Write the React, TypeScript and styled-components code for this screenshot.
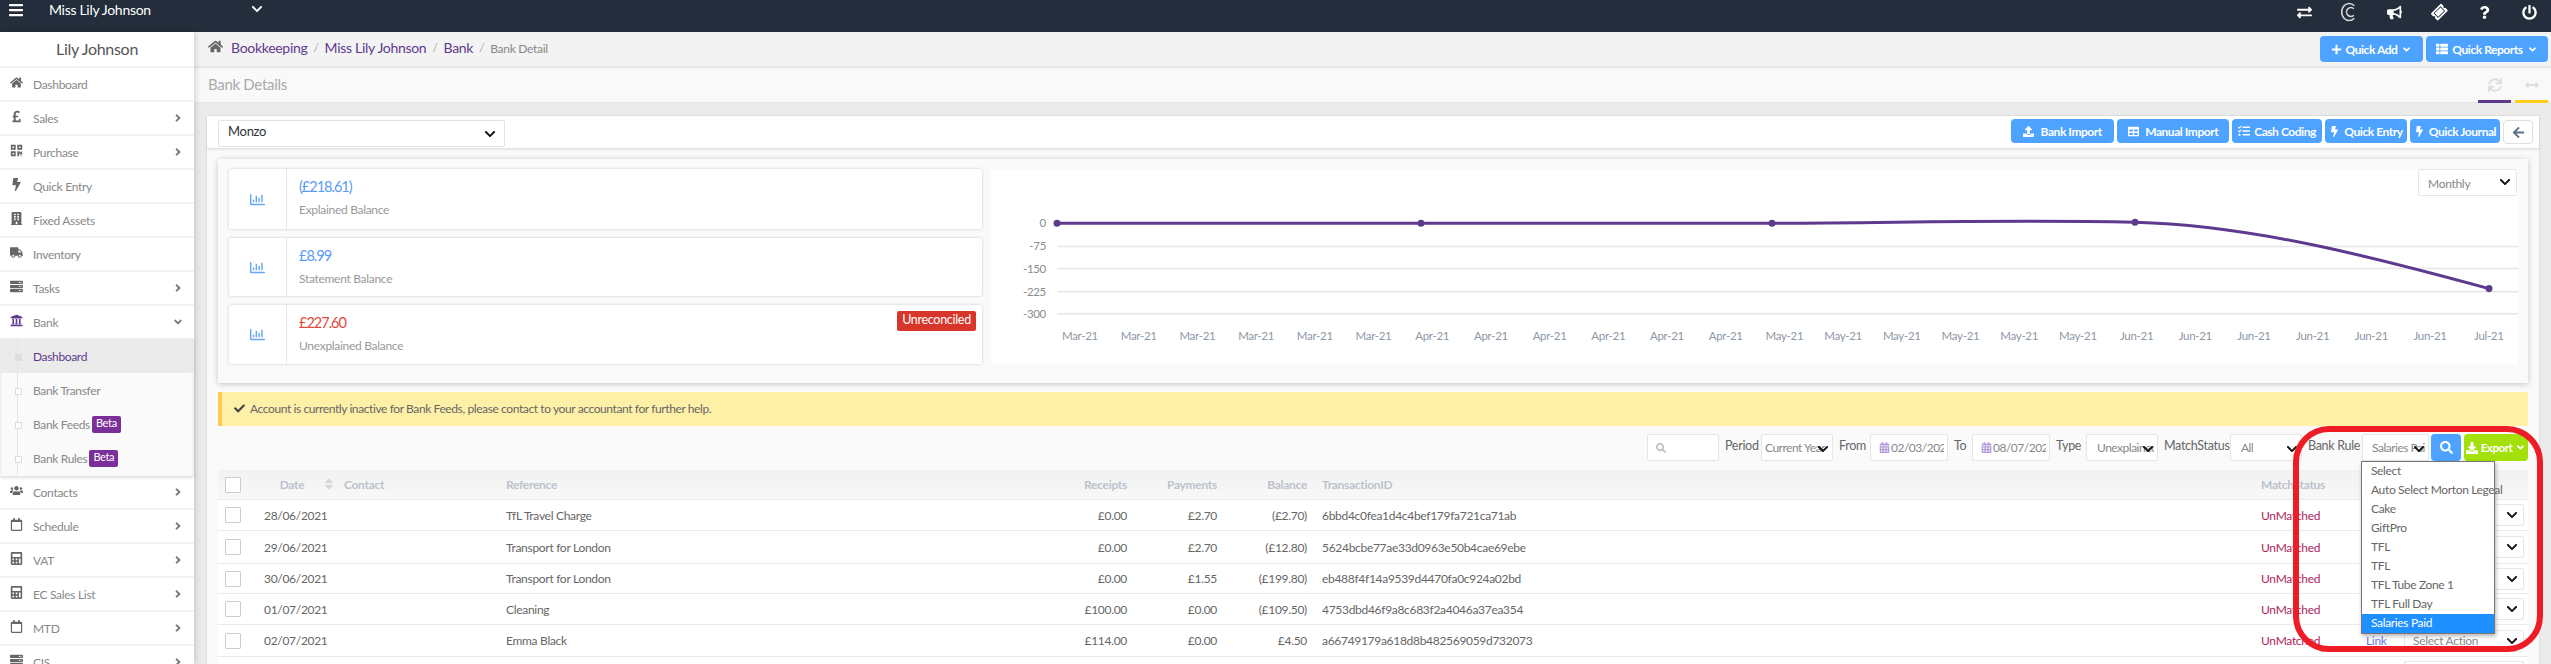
import React from "react";
import styled, { createGlobalStyle } from "styled-components";
import {
  FaBars, FaChevronDown, FaHome, FaPoundSign, FaQrcode, FaBolt, FaBuilding, FaTruck, FaServer,
  FaUniversity, FaUsers, FaRegCalendar, FaCalculator, FaAngleRight, FaAngleDown, FaRegChartBar,
  FaCheck, FaSearch, FaCalendarAlt, FaDownload, FaPlus, FaThList, FaUpload, FaTable, FaTasks,
  FaArrowLeft, FaExchangeAlt, FaSync, FaArrowsAltH, FaBullhorn, FaTicketAlt, FaQuestion, FaPowerOff,
  FaSort,
} from "react-icons/fa";

const Global = createGlobalStyle`
  html, body { margin: 0; padding: 0; background: #ebebeb; }
  * { box-sizing: border-box; }
  body { font-family: Lato, "Open Sans", "Liberation Sans", sans-serif; font-size: 12px; color: #666; letter-spacing: -0.3px; }
  button { letter-spacing: -0.45px; }
`;

const Page = styled.div`
  position: relative;
  width: 2551px;
  height: 664px;
  overflow: hidden;
  display: flex;
  flex-direction: column;
`;

const TopBar = styled.header`
  height: 32px;
  flex: none;
  background: #232d3b;
  color: #fff;
  display: flex;
  align-items: flex-start;
`;
const Burger = styled.span`
  width: 49px;
  padding: 2px 0 0 8px;
  font-size: 16px;
  line-height: 16px;
`;
const Client = styled.div`
  width: 202px;
  font-size: 14px;
  line-height: 20px;
`;
const ClientCaret = styled.span`
  font-size: 12px;
  line-height: 20px;
  padding-top: 1px;
`;
const TopIcons = styled.div`
  margin-left: auto;
  padding-right: 14px;
  display: flex;
  gap: 29px;
  height: 24px;
  align-items: center;
  font-size: 15px;
`;
const TopIcon = styled.span<{ $tilt?: boolean }>`
  width: 16px;
  display: flex;
  justify-content: center;
  transform: ${(p) => (p.$tilt ? "rotate(-45deg)" : "none")};
`;

const Body = styled.div`
  flex: 1;
  display: flex;
  min-height: 0;
`;
const Sidebar = styled.aside`
  width: 194px;
  flex: none;
  background: #fff;
  box-shadow: 2px 0 6px rgba(0, 0, 0, 0.14);
  position: relative;
  z-index: 2;
`;
const SideTitle = styled.div`
  height: 36px;
  font-size: 16px;
  line-height: 34px;
  text-align: center;
  color: #555;
  border-bottom: 2px solid #f3f3f3;
`;
const NavItem = styled.div`
  height: 34px;
  display: flex;
  align-items: center;
  border-bottom: 2px solid #f3f3f3;
  color: #888;
  font-size: 12px;
`;
const NavIcon = styled.span<{ $purple?: boolean }>`
  width: 33px;
  display: flex;
  justify-content: center;
  padding-bottom: 3px;
  padding-right: 1px;
  font-size: 13px;
  color: ${(p) => (p.$purple ? "#5e3a8e" : "#666")};
`;
const NavCaret = styled.span`
  margin-left: auto;
  padding-right: 10px;
  font-size: 12px;
  display: flex;
  color: #777;
`;
const SubMenu = styled.div`
  background: #fafafa;
  box-shadow: inset 0 2px 3px rgba(0, 0, 0, 0.13), 0 2px 3px rgba(0, 0, 0, 0.13);
  height: 137px;
  margin-top: -1px;
  position: relative;
`;
const SubItem = styled.div<{ $active?: boolean }>`
  position: relative;
  height: 34px;
  padding-left: 33px;
  display: flex;
  align-items: center;
  gap: 2px;
  font-size: 12px;
  letter-spacing: -0.35px;
  color: ${(p) => (p.$active ? "#5e3a8e" : "#888")};
  background: ${(p) => (p.$active ? "#ebebeb" : "transparent")};
  &::before {
    content: "";
    position: absolute;
    left: 17px;
    top: 0;
    bottom: 0;
    width: 1px;
    background: #e4e4e4;
  }
  &::after {
    content: "";
    position: absolute;
    left: 15px;
    top: 15px;
    width: 5px;
    height: 5px;
    border: 1px solid #ddd;
    background: ${(p) => (p.$active ? "#ddd" : "#fff")};
  }
`;
const Beta = styled.span`
  background: #7b2f9b;
  color: #fff;
  font-size: 11px;
  line-height: 14px;
  height: 17px;
  width: 29px;
  text-align: center;
  border-radius: 2px;
`;

const Main = styled.main`
  flex: 1;
  min-width: 0;
  display: flex;
  flex-direction: column;
`;
const Crumbs = styled.div`
  height: 36px;
  flex: none;
  background: #f3f3f3;
  border-bottom: 2px solid #e8e8e8;
  display: flex;
  align-items: flex-start;
  padding: 4px 3px 0 14px;
`;
const CrumbHome = styled.span`
  color: #666;
  font-size: 15px;
  width: 23px;
  line-height: 20px;
  padding-top: 2px;
`;
const CrumbLink = styled.span`
  color: #5e3a8e;
  font-size: 14px;
  line-height: 24px;
`;
const CrumbSep = styled.span`
  color: #aaa;
  font-size: 12px;
  line-height: 24px;
  padding: 0 6px;
`;
const CrumbNow = styled.span`
  color: #888;
  font-size: 12px;
  line-height: 26px;
`;
const QuickGroup = styled.div`
  margin-left: auto;
  display: flex;
  gap: 3px;
`;
const BlueBtn = styled.button<{ $w: number; $h?: number }>`
  width: ${(p) => p.$w}px;
  height: ${(p) => p.$h ?? 24}px;
  padding: 0;
  border: 0;
  border-radius: 4px;
  background: #4da3ff;
  color: #fff;
  font: 700 12px Lato, sans-serif;
  display: flex;
  align-items: center;
  justify-content: center;
  gap: 4px;
`;
const TitleBar = styled.div`
  height: 35px;
  flex: none;
  background: #f9f9f9;
  border-bottom: 1px solid #e4e4e4;
  display: flex;
  align-items: flex-start;
  padding: 0 3px 0 14px;
`;
const PageTitle = styled.h1`
  margin: 0;
  font-weight: 400;
  font-size: 15px;
  line-height: 32px;
  color: #aaa;
`;
const TitleTools = styled.div`
  margin-left: auto;
  display: flex;
  gap: 4px;
`;
const TitleTool = styled.div<{ $c: string }>`
  width: 33px;
  height: 34px;
  border-bottom: 3px solid ${(p) => p.$c};
  display: flex;
  justify-content: center;
  align-items: center;
  color: #dfdfdf;
  font-size: 14px;
  position: relative;
  top: 1px;
`;

const Card = styled.section`
  margin: 13px 12px 0 13px;
  background: #fafafa;
  flex: 1;
  min-height: 0;
  box-shadow: 0 0 2px rgba(0, 0, 0, 0.15);
  display: flex;
  flex-direction: column;
`;
const CardHead = styled.div`
  height: 33px;
  flex: none;
  background: #fff;
  border-bottom: 1px solid #e2e2e2;
  box-shadow: 0 1px 2px rgba(0, 0, 0, 0.08);
  display: flex;
  align-items: flex-start;
  padding: 3px 6px 0 11px;
`;
const AccountSelect = styled.div`
  position: relative;
  width: 287px;
  height: 27px;
  margin-top: 1px;
  border: 1px solid #e3e3e3;
  border-radius: 2px;
  color: #333;
  font-size: 13px;
  line-height: 20px;
  padding-left: 9px;
`;
const CaretBox = styled.span<{ $r?: number; $s?: number; $t?: number }>`
  position: absolute;
  right: ${(p) => p.$r ?? 6}px;
  top: ${(p) => p.$t ?? 6}px;
  color: #111;
  font-size: ${(p) => p.$s ?? 12}px;
  display: flex;
`;
const CardActions = styled.div`
  margin-left: auto;
  display: flex;
  gap: 3px;
`;
const BackBtn = styled.button`
  width: 30px;
  height: 24px;
  margin-top: 1px;
  border: 1px solid #ddd;
  border-radius: 4px;
  background: #fff;
  color: #5a7186;
  font-size: 13px;
  padding: 0;
  display: flex;
  align-items: center;
  justify-content: center;
`;
const CardBody = styled.div`
  padding: 10px 11px 0;
  flex: 1;
  min-height: 0;
`;
const Summary = styled.div`
  height: 224px;
  background: #fafafa;
  box-shadow: 0 1px 6px rgba(0, 0, 0, 0.22);
  padding: 10px 10px 19px 11px;
  display: grid;
  grid-template-columns: 753px 1fr;
  column-gap: 9px;
`;
const Stats = styled.div`
  display: grid;
  grid-template-rows: 60px 58px 59px;
  row-gap: 9px;
`;
const Stat = styled.div`
  position: relative;
  background: #fff;
  border-radius: 2px;
  box-shadow: 0 0 3px rgba(0, 0, 0, 0.2);
  display: grid;
  grid-template-columns: 58px 1fr;
`;
const StatIcon = styled.div`
  border-right: 1px solid #e6e6e6;
  color: #64a5f5;
  font-size: 15px;
  display: flex;
  align-items: center;
  justify-content: center;
`;
const StatText = styled.div`
  padding: 8px 0 0 12px;
`;
const StatValue = styled.div<{ $red?: boolean }>`
  font-size: 14.5px;
  letter-spacing: -1px;
  line-height: 20px;
  color: ${(p) => (p.$red ? "#dc4a3d" : "#5a9bf6")};
`;
const StatLabel = styled.div`
  margin-top: 5px;
  font-size: 12px;
  line-height: 16px;
  color: #999;
`;
const Badge = styled.span`
  position: absolute;
  top: 6px;
  right: 6px;
  width: 79px;
  height: 20px;
  border-radius: 2px;
  background: #d9362b;
  color: #fff;
  font-size: 12.5px;
  line-height: 18px;
  text-align: center;
`;
const ChartPanel = styled.div`
  position: relative;
  background: #fff;
`;
const ChartSvg = styled.svg`
  display: block;
  width: 100%;
  height: 100%;
`;
const PeriodSelect = styled.div`
  position: absolute;
  right: 1px;
  top: 0;
  width: 99px;
  height: 27px;
  border: 1px solid #e6e6e6;
  border-radius: 2px;
  background: #fff;
  color: #888;
  font-size: 12px;
  line-height: 27px;
  padding-left: 9px;
`;
const Alert = styled.div`
  margin-top: 9px;
  height: 34px;
  background: #fff0a8;
  border-left: 4px solid #ffc94d;
  display: flex;
  align-items: center;
  gap: 5px;
  padding: 0 0 2px 12px;
  color: #666;
  font-size: 12px;
  letter-spacing: -0.4px;
  svg {
    color: #444;
    font-size: 11px;
  }
`;
const Filters = styled.div`
  margin-top: 8px;
  height: 27px;
  display: flex;
  justify-content: flex-end;
  gap: 6px;
  position: relative;
`;
const FilterLabel = styled.span<{ $w: number }>`
  font-size: 12.5px;
  color: #666;
  line-height: 24px;
  width: ${(p) => p.$w}px;
  white-space: nowrap;
`;
const Field = styled.div<{ $w: number }>`
  position: relative;
  width: ${(p) => p.$w}px;
  height: 27px;
  flex: none;
  background: #fff;
  border: 1px solid #e6e6e6;
  border-radius: 2px;
  padding: 0 3px;
  color: #888;
  font-size: 12px;
  letter-spacing: -0.5px;
  line-height: 27px;
  white-space: nowrap;
  overflow: hidden;
  display: flex;
  align-items: center;
  gap: 1px;
  svg {
    flex: none;
  }
`;
const FieldText = styled.span<{ $pad?: number }>`
  padding-left: ${(p) => p.$pad ?? 0}px;
  overflow: hidden;
`;
const SearchGlyph = styled.span`
  color: #bbb;
  font-size: 10px;
  padding-left: 5px;
  display: flex;
`;
const CalGlyph = styled.span`
  color: #b39ddb;
  font-size: 11px;
  padding-left: 5px;
  display: flex;
`;
const RuleWrap = styled.div`
  position: relative;
  flex: none;
`;
const RuleList = styled.ul`
  position: absolute;
  z-index: 5;
  top: 27px;
  left: -1px;
  width: 134px;
  height: 173px;
  margin: 0;
  padding: 0;
  list-style: none;
  background: #fff;
  border: 1px solid #767676;
  box-shadow: 1px 2px 4px rgba(0, 0, 0, 0.3);
`;
const RuleOption = styled.li<{ $on?: boolean }>`
  height: 19px;
  line-height: 18px;
  padding-left: 9px;
  font-size: 12px;
  letter-spacing: -0.35px;
  white-space: nowrap;
  color: ${(p) => (p.$on ? "#fff" : "#666")};
  background: ${(p) => (p.$on ? "#1e90ff" : "transparent")};
`;
const SearchBtn = styled.button`
  width: 30px;
  height: 27px;
  flex: none;
  margin-left: -4px;
  border: 0;
  padding: 0;
  border-radius: 4px;
  background: #4da3ff;
  color: #fff;
  font-size: 13px;
  display: flex;
  align-items: center;
  justify-content: center;
`;
const ExportBtn = styled.button`
  width: 64px;
  height: 27px;
  flex: none;
  margin-left: -3px;
  border: 0;
  padding: 0;
  border-radius: 4px;
  background: #a4e00a;
  color: #fff;
  font: 700 11.5px Lato, sans-serif;
  display: flex;
  align-items: center;
  justify-content: center;
  gap: 3px;
`;

const COLS = "46px 80px 162px 531px 90px 90px 90px 15px 939px 105px 38px 120px 4px";
const HeadRow = styled.div`
  margin-top: 9px;
  height: 30px;
  display: grid;
  grid-template-columns: ${COLS};
  align-items: center;
  background: linear-gradient(#f2f2f2, #f8f8f8);
  border-bottom: 1px solid #e8ebf1;
  color: #bcc2cc;
  font-weight: 700;
  font-size: 12px;
`;
const Row = styled.div<{ $h: number }>`
  height: ${(p) => p.$h}px;
  display: grid;
  grid-template-columns: ${COLS};
  align-items: center;
  background: #fff;
  border-bottom: 1px solid #e8ebf1;
  color: #666;
  font-size: 12px;
  white-space: nowrap;
`;
const Check = styled.span`
  display: block;
  margin-left: 7px;
  width: 16px;
  height: 16px;
  border: 1px solid #ccc;
  border-radius: 1px;
  background: #fff;
`;
const DateCell = styled.span`
  position: relative;
  width: 56px;
  text-align: center;
`;
const SortMark = styled.span`
  position: absolute;
  left: 58px;
  top: 0;
  color: #d8d8d8;
  font-size: 14px;
  display: flex;
`;
const Num = styled.span`
  text-align: right;
`;
const Status = styled.span`
  color: #b0245c;
`;
const LinkText = styled.span`
  color: #6a76e8;
`;
const ActionSelect = styled.div`
  position: relative;
  height: 22px;
  border: 1px solid #e6e6e6;
  border-radius: 2px;
  color: #888;
  line-height: 20px;
  padding-left: 8px;
  font-size: 12px;
`;
const Annotation = styled.div`
  position: absolute;
  z-index: 9;
  left: 2293px;
  top: 426px;
  width: 250px;
  height: 226px;
  border: 6px solid #ee1c25;
  border-radius: 36px;
  pointer-events: none;
`;

const nav1: [React.ReactNode, string, boolean][] = [
  [<FaHome />, "Dashboard", false],
  [<FaPoundSign />, "Sales", true],
  [<FaQrcode />, "Purchase", true],
  [<FaBolt />, "Quick Entry", false],
  [<FaBuilding />, "Fixed Assets", false],
  [<FaTruck />, "Inventory", false],
  [<FaServer />, "Tasks", true],
];
const nav2: [React.ReactNode, string][] = [
  [<FaUsers />, "Contacts"],
  [<FaRegCalendar />, "Schedule"],
  [<FaCalculator />, "VAT"],
  [<FaCalculator />, "EC Sales List"],
  [<FaRegCalendar />, "MTD"],
  [<FaServer />, "CIS"],
];
const rows = [
  ["28/06/2021", "TfL Travel Charge", "£0.00", "£2.70", "(£2.70)", "6bbd4c0fea1d4c4bef179fa721ca71ab", 31],
  ["29/06/2021", "Transport for London", "£0.00", "£2.70", "(£12.80)", "5624bcbe77ae33d0963e50b4cae69ebe", 33],
  ["30/06/2021", "Transport for London", "£0.00", "£1.55", "(£199.80)", "eb488f4f14a9539d4470fa0c924a02bd", 30],
  ["01/07/2021", "Cleaning", "£100.00", "£0.00", "(£109.50)", "4753dbd46f9a8c683f2a4046a37ea354", 31],
  ["02/07/2021", "Emma Black", "£114.00", "£0.00", "£4.50", "a66749179a618d8b482569059d732073", 32],
] as const;
const rules = ["Select", "Auto Select Morton Legeal", "Cake", "GiftPro", "TFL", "TFL", "TFL Tube Zone 1", "TFL Full Day", "Salaries Paid"];

const months = [...Array(6).fill("Mar-21"), ...Array(6).fill("Apr-21"), ...Array(6).fill("May-21"), ...Array(6).fill("Jun-21"), "Jul-21"];
const axis: [string, number][] = [["0", 54], ["-75", 77], ["-150", 99], ["-225", 122], ["-300", 144]];
const points: [number, number][] = [[66, 54], [430, 54], [781, 54], [1144, 53], [1498, 119]];

const CoinIcon = () => (
  <svg width="16" height="20" viewBox="0 0 15 18" fill="none" stroke="#d5d5d5" strokeWidth="1.5">
    <path d="M12.5 3.2A7 8 0 1 0 12.5 14.8" />
    <path d="M12 6A4 4.2 0 1 0 12 12" />
  </svg>
);

function Chart() {
  return (
    <ChartSvg viewBox="0 0 1527 194" preserveAspectRatio="none">
      {axis.slice(1).map(([, y]) => (
        <line key={y} x1="66" x2="1527" y1={y} y2={y} stroke="#e6e6e6" strokeWidth="1.5" />
      ))}
      {axis.map(([t, y]) => (
        <text key={t} x="55" y={y + 4} textAnchor="end" fontSize="11.5" fill="#8b8b8b" fontFamily="Lato, sans-serif">{t}</text>
      ))}
      {months.map((m, i) => (
        <text key={i} x={89 + i * 58.7} y="170" textAnchor="middle" fontSize="11.5" fill="#8d97a5" fontFamily="Lato, sans-serif">{m}</text>
      ))}
      <path d="M66 54 L781 54 C900 54 1000 50 1144 53 C1260 56 1380 87 1498 119" fill="none" stroke="#5e3a8e" strokeWidth="3" />
      {points.map(([x, y]) => (
        <circle key={x} cx={x} cy={y} r="3.5" fill="#5e3a8e" />
      ))}
    </ChartSvg>
  );
}

export default function App() {
  return (
    <Page>
      <Global />
      <TopBar>
        <Burger><FaBars /></Burger>
        <Client>Miss Lily Johnson</Client>
        <ClientCaret><FaChevronDown /></ClientCaret>
        <TopIcons>
          <TopIcon><FaExchangeAlt /></TopIcon>
          <TopIcon><CoinIcon /></TopIcon>
          <TopIcon><FaBullhorn /></TopIcon>
          <TopIcon $tilt><FaTicketAlt /></TopIcon>
          <TopIcon><FaQuestion size={13} /></TopIcon>
          <TopIcon><FaPowerOff /></TopIcon>
        </TopIcons>
      </TopBar>
      <Body>
        <Sidebar>
          <SideTitle>Lily Johnson</SideTitle>
          {nav1.map(([ic, t, caret]) => (
            <NavItem key={t}>
              <NavIcon>{ic}</NavIcon>
              {t}
              {caret && <NavCaret><FaAngleRight /></NavCaret>}
            </NavItem>
          ))}
          <NavItem>
            <NavIcon $purple><FaUniversity /></NavIcon>
            Bank
            <NavCaret><FaAngleDown /></NavCaret>
          </NavItem>
          <SubMenu>
            <SubItem $active>Dashboard</SubItem>
            <SubItem>Bank Transfer</SubItem>
            <SubItem>Bank Feeds <Beta>Beta</Beta></SubItem>
            <SubItem>Bank Rules<Beta>Beta</Beta></SubItem>
          </SubMenu>
          {nav2.map(([ic, t]) => (
            <NavItem key={t}>
              <NavIcon>{ic}</NavIcon>
              {t}
              <NavCaret><FaAngleRight /></NavCaret>
            </NavItem>
          ))}
        </Sidebar>
        <Main>
          <Crumbs>
            <CrumbHome><FaHome /></CrumbHome>
            <CrumbLink>Bookkeeping</CrumbLink>
            <CrumbSep>/</CrumbSep>
            <CrumbLink>Miss Lily Johnson</CrumbLink>
            <CrumbSep>/</CrumbSep>
            <CrumbLink>Bank</CrumbLink>
            <CrumbSep>/</CrumbSep>
            <CrumbNow>Bank Detail</CrumbNow>
            <QuickGroup>
              <BlueBtn $w={103} $h={26}><FaPlus size={11} /> Quick Add <FaAngleDown size={11} /></BlueBtn>
              <BlueBtn $w={122} $h={26}><FaThList size={12} /> Quick Reports <FaAngleDown size={11} /></BlueBtn>
            </QuickGroup>
          </Crumbs>
          <TitleBar>
            <PageTitle>Bank Details</PageTitle>
            <TitleTools>
              <TitleTool $c="#5e3a8e"><FaSync /></TitleTool>
              <TitleTool $c="#ffcc1a"><FaArrowsAltH /></TitleTool>
            </TitleTools>
          </TitleBar>
          <Card>
            <CardHead>
              <AccountSelect>
                Monzo
                <CaretBox $r={8} $t={7}><FaChevronDown /></CaretBox>
              </AccountSelect>
              <CardActions>
                <BlueBtn $w={103}><FaUpload size={11} /> &nbsp;Bank Import</BlueBtn>
                <BlueBtn $w={112}><FaTable size={11} /> &nbsp;Manual Import</BlueBtn>
                <BlueBtn $w={90}><FaTasks size={12} />Cash Coding</BlueBtn>
                <BlueBtn $w={82}><FaBolt size={11} />Quick Entry</BlueBtn>
                <BlueBtn $w={90}><FaBolt size={11} />Quick Journal</BlueBtn>
                <BackBtn><FaArrowLeft /></BackBtn>
              </CardActions>
            </CardHead>
            <CardBody>
              <Summary>
                <Stats>
                  <Stat>
                    <StatIcon><FaRegChartBar /></StatIcon>
                    <StatText>
                      <StatValue>(£218.61)</StatValue>
                      <StatLabel>Explained Balance</StatLabel>
                    </StatText>
                  </Stat>
                  <Stat>
                    <StatIcon><FaRegChartBar /></StatIcon>
                    <StatText>
                      <StatValue>£8.99</StatValue>
                      <StatLabel>Statement Balance</StatLabel>
                    </StatText>
                  </Stat>
                  <Stat>
                    <StatIcon><FaRegChartBar /></StatIcon>
                    <StatText>
                      <StatValue $red>£227.60</StatValue>
                      <StatLabel>Unexplained Balance</StatLabel>
                    </StatText>
                    <Badge>Unreconciled</Badge>
                  </Stat>
                </Stats>
                <ChartPanel>
                  <Chart />
                  <PeriodSelect>
                    Monthly
                    <CaretBox $r={5} $t={6}><FaChevronDown /></CaretBox>
                  </PeriodSelect>
                </ChartPanel>
              </Summary>
              <Alert>
                <FaCheck />
                Account is currently inactive for Bank Feeds, please contact to your accountant for further help.
              </Alert>
              <Filters>
                <Field $w={72}><SearchGlyph><FaSearch /></SearchGlyph></Field>
                <FilterLabel $w={30}>Period</FilterLabel>
                <Field $w={72}>
                  <FieldText>Current Year</FieldText>
                  <CaretBox $r={3} $t={8}><FaChevronDown /></CaretBox>
                </Field>
                <FilterLabel $w={25}>From</FilterLabel>
                <Field $w={78}><CalGlyph><FaCalendarAlt /></CalGlyph><FieldText>02/03/2021</FieldText></Field>
                <FilterLabel $w={12}>To</FilterLabel>
                <Field $w={78}><CalGlyph><FaCalendarAlt /></CalGlyph><FieldText>08/07/2021</FieldText></Field>
                <FilterLabel $w={24}>Type</FilterLabel>
                <Field $w={72}>
                  <FieldText $pad={7}>Unexplained</FieldText>
                  <CaretBox $r={3} $t={8}><FaChevronDown /></CaretBox>
                </Field>
                <FilterLabel $w={60}>MatchStatus</FilterLabel>
                <Field $w={72}>
                  <FieldText $pad={7}>All</FieldText>
                  <CaretBox $r={3} $t={8}><FaChevronDown /></CaretBox>
                </Field>
                <FilterLabel $w={48}>Bank Rule</FilterLabel>
                <RuleWrap>
                  <Field $w={67}>
                    <FieldText $pad={6}>Salaries Paid</FieldText>
                    <CaretBox $r={3} $t={8}><FaChevronDown /></CaretBox>
                  </Field>
                  <RuleList>
                    {rules.map((r, i) => (
                      <RuleOption key={i} $on={i === rules.length - 1}>{r}</RuleOption>
                    ))}
                  </RuleList>
                </RuleWrap>
                <SearchBtn><FaSearch /></SearchBtn>
                <ExportBtn><FaDownload size={12} />Export<FaAngleDown size={11} /></ExportBtn>
              </Filters>
              <HeadRow>
                <Check />
                <DateCell>Date<SortMark><FaSort /></SortMark></DateCell>
                <span>Contact</span>
                <span>Reference</span>
                <Num>Receipts</Num>
                <Num>Payments</Num>
                <Num>Balance</Num>
                <span />
                <span>TransactionID</span>
                <span>MatchStatus</span>
              </HeadRow>
              {rows.map((r, i) => (
                <Row key={r[5]} $h={r[6]}>
                  <Check />
                  <DateCell>{r[0]}</DateCell>
                  <span />
                  <span>{r[1]}</span>
                  <Num>{r[2]}</Num>
                  <Num>{r[3]}</Num>
                  <Num>{r[4]}</Num>
                  <span />
                  <span>{r[5]}</span>
                  <Status>UnMatched</Status>
                  {i === 4 ? <LinkText>Link</LinkText> : <span />}
                  <ActionSelect>
                    Select Action
                    <CaretBox $r={5} $t={4}><FaChevronDown /></CaretBox>
                  </ActionSelect>
                </Row>
              ))}
              <Row $h={31}>
                <span /><span /><span /><span /><span /><span /><span /><span /><span /><span /><span />
                <ActionSelect />
              </Row>
            </CardBody>
          </Card>
        </Main>
      </Body>
      <Annotation />
    </Page>
  );
}
